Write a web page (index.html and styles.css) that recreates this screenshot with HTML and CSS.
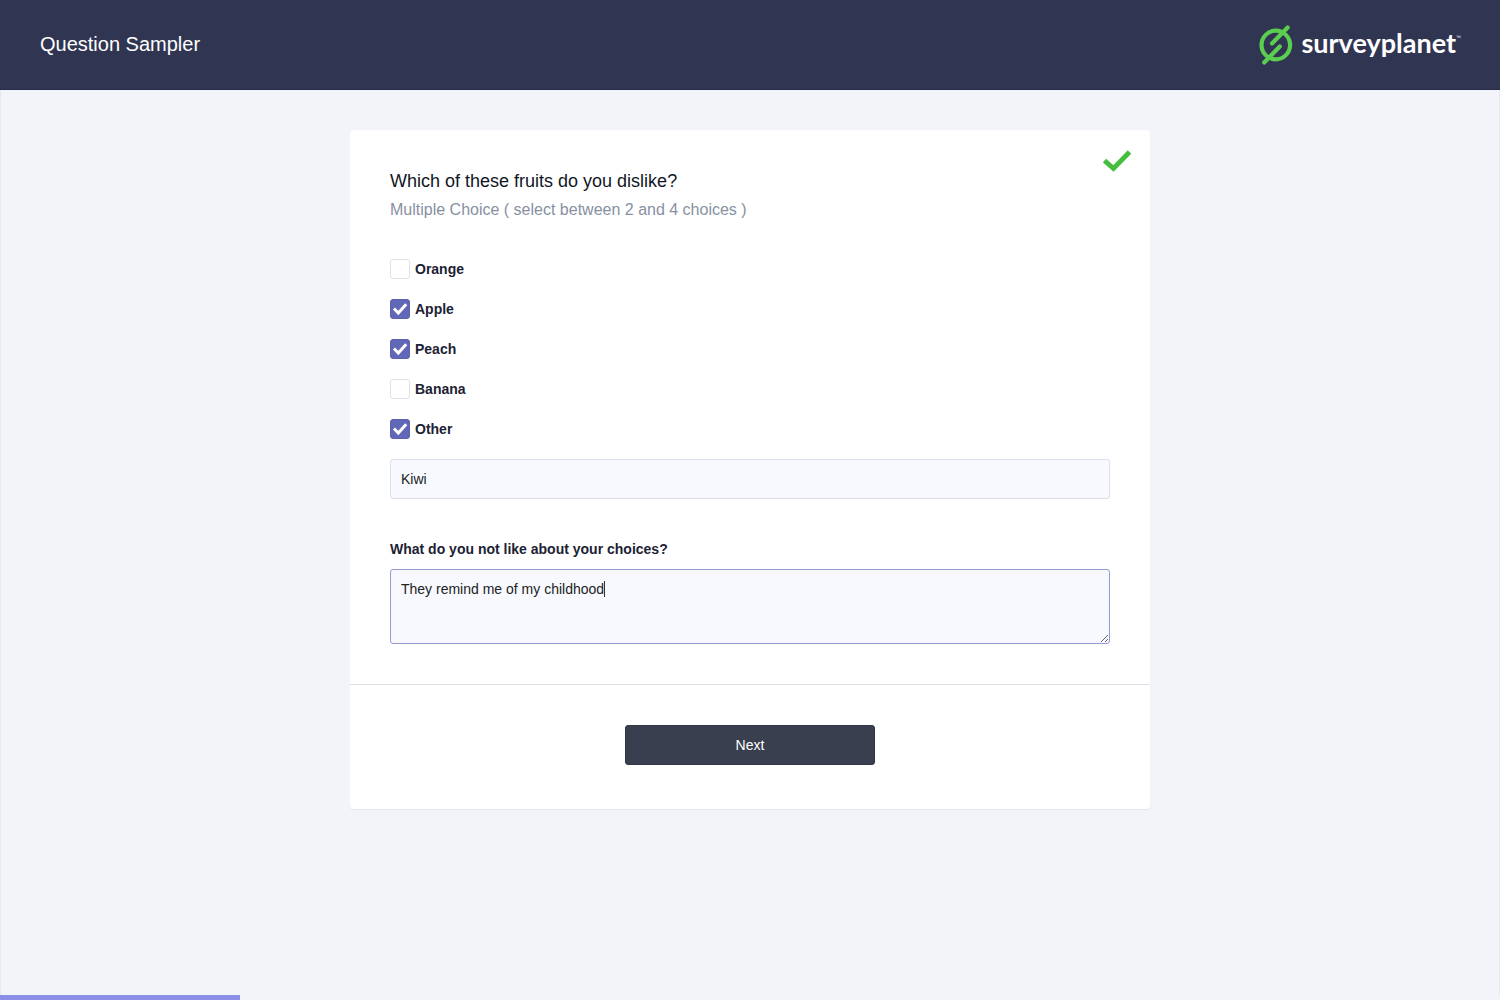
FILE: index.html
```html
<!DOCTYPE html>
<html lang="en">
<head>
<meta charset="utf-8">
<meta name="viewport" content="width=device-width, initial-scale=1">
<title>Question Sampler</title>
<link rel="stylesheet" href="styles.css">
</head>
<body>
<header class="header">
  <h1 class="header-title">Question Sampler</h1>
  <a class="brand" href="#">
    <svg class="brand-mark" viewBox="0 0 34 40" aria-hidden="true">
      <g fill="none" stroke="#5bce50" stroke-width="4.200" stroke-linecap="round">
        <circle cx="16.800" cy="20" r="14.300"/>
        <path d="M28.600 2.600L13 18.400"/>
        <path d="M20.800 21.600L5.200 37.400"/>
      </g>
    </svg>
    <span class="brand-name">surveyplanet</span><span class="brand-tm">™</span>
  </a>
</header>
<main class="main">
  <form class="card">
    <section class="question">
      <svg class="done" viewBox="0 0 28 22" aria-hidden="true"><path d="M1.500 10.500L10.500 18.500L26.500 2" fill="none" stroke="#45be3e" stroke-width="4.800"/></svg>
      <h2 class="question-title">Which of these fruits do you dislike?</h2>
      <p class="question-hint">Multiple Choice ( select between 2 and 4 choices )</p>
      <div class="options">
        <label class="option"><input class="tick" type="checkbox">Orange</label>
        <label class="option"><input class="tick" type="checkbox" checked>Apple</label>
        <label class="option"><input class="tick" type="checkbox" checked>Peach</label>
        <label class="option"><input class="tick" type="checkbox">Banana</label>
        <label class="option"><input class="tick" type="checkbox" checked>Other</label>
      </div>
      <input class="field" type="text" value="Kiwi" aria-label="Other">
      <label class="field-label" for="reason">What do you not like about your choices?</label>
      <div class="area-wrap">
        <textarea class="field area" id="reason">They remind me of my childhood</textarea>
        <span class="caret"></span>
      </div>
    </section>
    <footer class="actions"><button class="next" type="button">Next</button></footer>
  </form>
</main>
<div class="progress"><div class="progress-bar" style="width:16%"></div></div>
</body>
</html>
```
FILE: styles.css
```css
* { box-sizing: border-box; }
body {
  margin: 0;
  min-height: 100vh;
  display: flex;
  flex-direction: column;
  background: #f3f4f9;
  color: #1c2233;
  font: 14px/20px "Liberation Sans", Arial, sans-serif;
}
.header {
  display: flex;
  align-items: center;
  justify-content: space-between;
  height: 90px;
  padding: 0 40px;
  background: #303552;
  border-bottom: 1px solid #272b48;
  color: #fff;
}
.header-title { margin: 0; font-size: 20px; line-height: 24px; font-weight: 400; padding-bottom: 2px; }
.brand { display: flex; align-items: center; color: #fff; text-decoration: none; }
.brand-mark { width: 34px; height: 40px; margin-right: 8px; }
.brand-name { padding-bottom: 4px; font: 700 27px/32px Lato, sans-serif; }
.brand-tm { align-self: flex-start; width: 4px; font-size: 5px; line-height: 24px; }
.main {
  flex: 1;
  padding: 40px 20px;
  border: solid #e8e9ee;
  border-width: 0 1px;
}
.card {
  max-width: 800px;
  margin: 0 auto;
  background: #fff;
  border-radius: 4px;
  box-shadow: 0 1px 1px #e3e5ec;
}
.question { position: relative; padding: 39px 40px 40px; border-bottom: 1px solid #dfe1e6; }
.done { position: absolute; top: 20px; right: 19px; width: 28px; height: 22px; }
.question-title { margin: 0; font-size: 18px; line-height: 24px; font-weight: 400; color: #111625; }
.question-hint { margin: 5px 0 0; font-size: 16px; line-height: 24px; color: #8790a2; }
.options { display: grid; gap: 20px; margin: 37px 0 20px; }
.option { display: flex; align-items: center; gap: 5px; height: 20px; font-weight: 700; }
.tick {
  appearance: none;
  width: 20px;
  height: 20px;
  margin: 0;
  border: 1px solid #e0e1e6;
  border-radius: 3px;
  background: #fff;
}
.tick:checked {
  border-color: #5a60b0;
  background: #6267b8 url("data:image/svg+xml,%3Csvg xmlns='http://www.w3.org/2000/svg' viewBox='0 0 18 18'%3E%3Cpath d='M3 8.500L7.300 13L15.200 4.200' fill='none' stroke='white' stroke-width='2.900'/%3E%3C/svg%3E");
}
.field {
  display: block;
  width: 100%;
  height: 40px;
  padding: 9px 10px;
  border: 1px solid #dddfea;
  border-radius: 3px;
  background: #f7f9fe;
  color: #222;
  font: inherit;
  outline: none;
}
.field-label { display: block; margin: 40px 0 10px; font-weight: 700; }
.area-wrap { position: relative; }
.area { height: 75px; border-color: #959ad3; resize: vertical; }
.caret { position: absolute; top: 12px; left: 214px; width: 1px; height: 16px; background: #333; }
.actions { display: flex; justify-content: center; padding: 40px 40px 44px; }
.next {
  width: 250px;
  height: 40px;
  border: 1px solid #303645;
  border-radius: 3px;
  background: #393f4e;
  color: #fff;
  font: inherit;
}
.progress { height: 5px; }
.progress-bar { height: 100%; background: #8b8fe8; }
```
